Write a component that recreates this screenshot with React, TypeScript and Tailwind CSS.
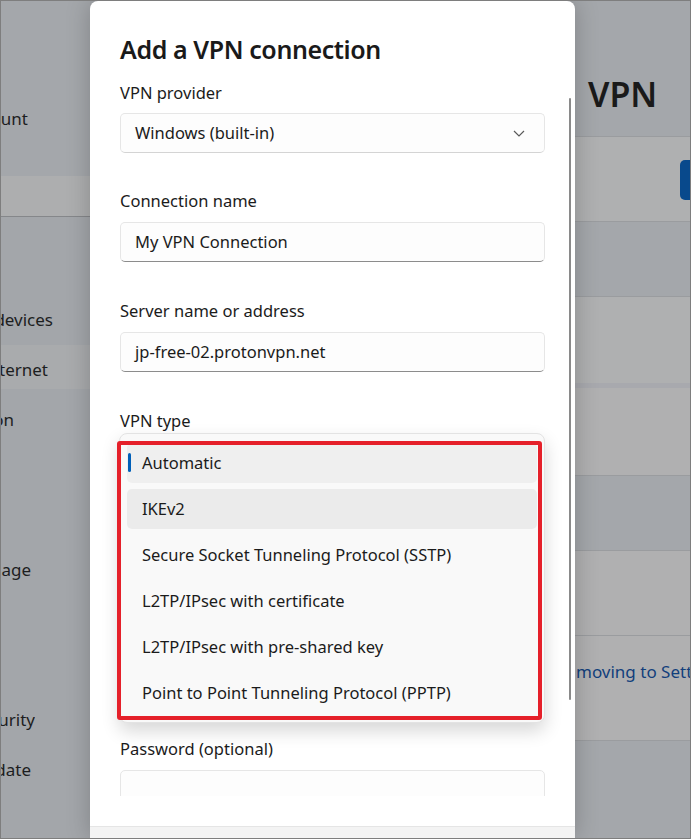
const NAV = [
  { label: "System", end: 0 },
  { label: "Bluetooth & devices", end: 52 },
  { label: "Network & internet", end: 47, active: true },
  { label: "Personalization", end: 13 },
  { label: "Apps", end: 0 },
  { label: "Accounts", end: 0 },
  { label: "Time & language", end: 30 },
  { label: "Gaming", end: 0 },
  { label: "Accessibility", end: 0 },
  { label: "Privacy & security", end: 34 },
  { label: "Windows Update", end: 30 },
];

const VPN_TYPES = [
  "Automatic",
  "IKEv2",
  "Secure Socket Tunneling Protocol (SSTP)",
  "L2TP/IPsec with certificate",
  "L2TP/IPsec with pre-shared key",
  "Point to Point Tunneling Protocol (PPTP)",
];

const Label = ({ text, className = "" }: { text: string; className?: string }) => (
  <div className={`text-[16.5px] leading-6 text-[#1b1b1b] ${className}`}>{text}</div>
);

const TextBox = ({ value, className = "" }: { value?: string; className?: string }) => (
  <div
    className={`h-[40px] w-[425px] shrink-0 flex items-center pl-[14px] rounded-[5px] bg-[#fdfdfd] border border-[#e6e6e6] border-b-[#8c8c8c] text-[16.5px] text-[#1b1b1b] ${className}`}
  >
    {value}
  </div>
);

const ComboBox = ({ value, className = "" }: { value?: string; className?: string }) => (
  <div
    className={`h-[40px] w-[425px] shrink-0 flex items-center justify-between pl-[14px] pr-[19px] rounded-[5px] bg-[#fdfdfd] border border-[#e6e6e6] border-b-[#d4d4d4] text-[16.5px] text-[#1b1b1b] ${className}`}
  >
    <span>{value}</span>
    <svg width="12" height="7" viewBox="0 0 12 7" fill="none">
      <polyline points="1,1 6,6 11,1" stroke="#5a5a5a" strokeWidth="1.2" />
    </svg>
  </div>
);

const Background = () => (
  <div className="flex h-full">
    {/* left nav, mostly hidden behind the dialog */}
    <div className="w-[89px] shrink-0 flex flex-col bg-[#a3a6aa] text-[17px] text-[#1d1e1f]">
      <div className="h-[175px] bg-[#a4a7ab] pt-[106px]">
        <div className="w-[27px] flex justify-end overflow-hidden whitespace-nowrap leading-6">Account</div>
      </div>
      <div className="h-[41px] bg-[#adaeaf] border-b border-[#85878a]" />
      <div className="flex flex-col gap-[6px] pt-[28px]">
        {NAV.map((n) => (
          <div
            key={n.label}
            className={`h-[44px] pt-[5px] flex items-center ${n.active ? "bg-[#a9abad]" : ""}`}
          >
            {n.end > 0 && (
              <div
                className="flex justify-end overflow-hidden whitespace-nowrap leading-6"
                style={{ width: n.end }}
              >
                {n.label}
              </div>
            )}
          </div>
        ))}
      </div>
    </div>
    <div className="flex-1" />
    {/* right content, VPN page */}
    <div className="w-[115px] shrink-0 flex flex-col bg-[#a4a7ab] overflow-hidden">
      <div className="h-[136px] pt-[71px] pl-[13px] border-b border-[#9a9c9f] text-[34px] leading-[44px] font-semibold text-[#1a1a1a]">
        VPN
      </div>
      <div className="h-[85px] bg-[#afb0b1] border-b border-[#9a9c9f] pt-[23px]">
        <div className="ml-[105px] w-[20px] h-[40px] rounded-[5px] bg-[#08498c]" />
      </div>
      <div className="h-[75px] border-b border-[#9a9c9f]" />
      <div className="h-[86px] bg-[#afb0b1]" />
      <div className="h-[5px] bg-[#a8a9ae]" />
      <div className="h-[88px] bg-[#b0b0b1] border-b border-[#9a9c9f]" />
      <div className="h-[75px] border-b border-[#9a9c9f]" />
      <div className="h-[85px] bg-[#b0b0b1] border-b border-[#9a9c9f]" />
      <div className="h-[105px] bg-[#b0b0b1] border-b border-[#9a9c9f] pt-[24px] pl-[1px] text-[17px] leading-6 text-[#123f7c] whitespace-nowrap">
        moving to Settings
      </div>
      <div className="flex-1" />
    </div>
  </div>
);

const Dialog = () => (
  <div className="absolute left-[89px] top-0 bottom-0 w-[485px] bg-white rounded-t-[8px] shadow-[0_0_24px_rgba(0,0,0,0.22)] flex flex-col overflow-hidden">
    <div className="relative h-[795px] shrink-0 overflow-hidden px-[30px] pt-[30px]">
      <div className="text-[25px] leading-[36px] font-semibold tracking-[-0.4px] text-[#1a1a1a]">
        Add a VPN connection
      </div>

      <Label text="VPN provider" className="mt-[14px]" />
      <ComboBox value="Windows (built-in)" className="mt-[8px]" />

      <Label text="Connection name" className="mt-[36px]" />
      <TextBox value="My VPN Connection" className="mt-[9px]" />

      <Label text="Server name or address" className="mt-[37px]" />
      <TextBox value="jp-free-02.protonvpn.net" className="mt-[9px]" />

      <Label text="VPN type" className="mt-[37px]" />
      <ComboBox className="mt-[9px]" />

      {/* sign-in fields, covered by the open dropdown */}
      <div className="h-[218px]" />

      <Label text="Password (optional)" className="mt-[37px]" />
      <TextBox className="mt-[9px] border-b-[#e6e6e6]" />

      {/* scrollbar */}
      <div className="absolute left-[479px] top-[97px] w-[2px] h-[602px] rounded-full bg-[#8a8a8a]" />

      {/* open VPN type dropdown */}
      <div className="absolute left-[29px] top-[432px] w-[426px] h-[290px] rounded-[8px] border border-[#e3e3e3] bg-[#f9f9f9] shadow-[0_8px_18px_rgba(0,0,0,0.16)] pt-[9px] px-[7px] flex flex-col gap-[6px]">
        {VPN_TYPES.map((t, i) => (
          <div
            key={t}
            className={`relative h-[40px] shrink-0 flex items-center pl-[15px] rounded-[5px] text-[16.5px] text-[#1b1b1b] ${
              i === 0 ? "bg-[#efefef]" : i === 1 ? "bg-[#ebebeb]" : ""
            }`}
          >
            {i === 0 && (
              <div className="absolute left-[1px] top-[10px] w-[3px] h-[19px] rounded-full bg-[#005fb8]" />
            )}
            {t}
          </div>
        ))}
      </div>

      {/* annotation */}
      <div className="absolute left-[27px] top-[440px] w-[425px] h-[279px] border-[4px] border-[#e5202a] rounded-[3px]" />
    </div>
    <div className="h-[30px] shrink-0" />
    <div className="flex-1 bg-[#f3f3f3] border-t border-[#e5e5e5]" />
  </div>
);

export default function App() {
  return (
    <div className="relative w-[691px] h-[839px] overflow-hidden border border-[#7e7e7e] bg-[#a4a7ab] font-['Noto_Sans',sans-serif]">
      <Background />
      <Dialog />
    </div>
  );
}
